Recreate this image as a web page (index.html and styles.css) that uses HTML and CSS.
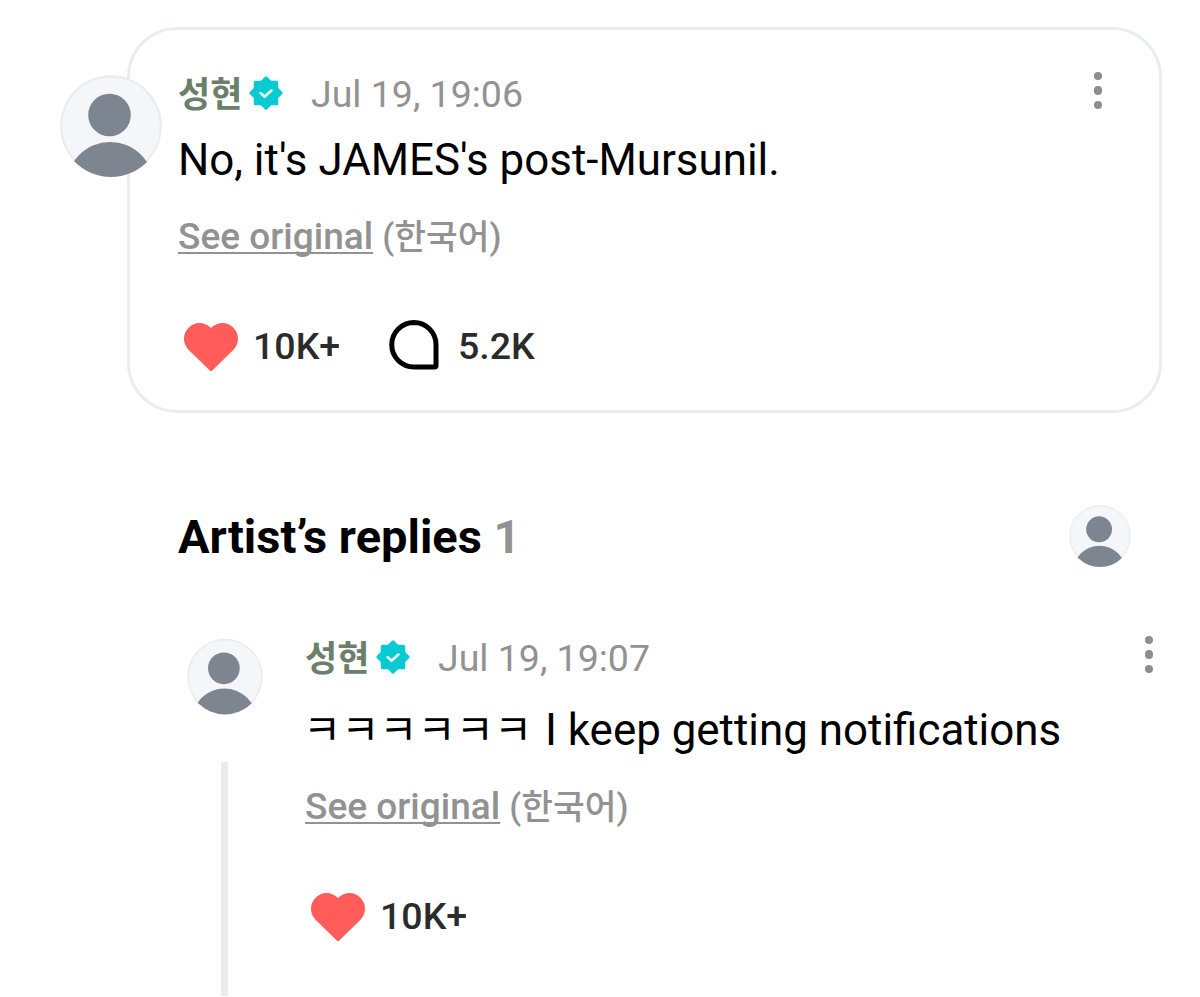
FILE: index.html
```html
<!DOCTYPE html>
<html lang="en">
<head>
  <meta charset="UTF-8">
  <title>Artist's replies</title>
  <link rel="stylesheet" href="styles.css">
</head>
<body>

<!-- Shared icons -->
<svg class="icon-defs" width="0" height="0">
  <clipPath id="avatar-clip"><circle cx="51" cy="51" r="51"/></clipPath>
  <symbol id="avatar" viewBox="0 0 102 102">
    <g clip-path="url(#avatar-clip)">
      <circle cx="51" cy="51" r="49.8" fill="#f4f6f9" stroke="#ebecee" stroke-width="2.4"/>
      <circle cx="49.5" cy="40" r="21.3" fill="#7d8591"/>
      <circle cx="50.2" cy="110.6" r="43.6" fill="#7d8591"/>
    </g>
  </symbol>
  <symbol id="verified" viewBox="0 0 34 34">
    <rect x="4.8" y="4.8" width="24.4" height="24.4" rx="1.5" fill="#08cad3"/>
    <rect x="4.8" y="4.8" width="24.4" height="24.4" rx="1.5" fill="#08cad3" transform="rotate(45 17 17)"/>
    <path d="M11.6 17.1l4 3.7 6.8-6.4" fill="none" stroke="#e6ffff" stroke-width="2.7" stroke-linecap="round" stroke-linejoin="round"/>
  </symbol>
  <symbol id="heart" viewBox="0 0 56 50">
    <path d="M28 7C20.500 .2 11.500 .8 5.600 6.700C-.8 13.200 -.3 22.800 5.500 28.700L26.500 49.300Q28 50.800 29.500 49.300L50.500 28.700C56.300 22.800 56.800 13.200 50.400 6.700C44.500 .8 35.500 .2 28 7z" fill="#ff5c5a"/>
  </symbol>
  <symbol id="comment" viewBox="0 0 50 50">
    <path d="M25 2.500A22.250 22.250 0 0 0 25 47H45.500Q47 47 47 45.500V24.500A22.100 22.100 0 0 0 25 2.500z" fill="none" stroke="#000" stroke-width="5"/>
  </symbol>
</svg>

<div class="page">
  <!-- Post -->
  <div class="post">
    <svg class="avatar post-avatar"><use href="#avatar"/></svg>
    <div class="meta">
      <span class="name">성현</span>
      <svg class="verified"><use href="#verified"/></svg>
      <span class="date">Jul 19, 19:06</span>
      <div class="more"><i></i><i></i><i></i></div>
    </div>
    <p class="message">No, it's JAMES's post-Mursunil.</p>
    <div class="original"><span class="link">See original</span> <span class="lang">(한국어)</span></div>
    <div class="reactions">
      <svg class="heart"><use href="#heart"/></svg>
      <span class="likes">10K+</span>
      <svg class="comment"><use href="#comment"/></svg>
      <span class="comments">5.2K</span>
    </div>
  </div>

  <!-- Replies -->
  <div class="replies-title">
    <h2>Artist’s replies <span class="total">1</span></h2>
    <svg class="avatar small-avatar"><use href="#avatar"/></svg>
  </div>

  <div class="reply">
    <div class="thread">
      <svg class="avatar reply-avatar"><use href="#avatar"/></svg>
      <div class="thread-line"></div>
    </div>
    <div class="reply-body">
      <div class="meta">
        <span class="name">성현</span>
        <svg class="verified"><use href="#verified"/></svg>
        <span class="date">Jul 19, 19:07</span>
        <div class="more"><i></i><i></i><i></i></div>
      </div>
      <p class="message"><span class="laugh">ㅋㅋㅋㅋㅋㅋ</span> I keep getting notifications</p>
      <div class="original"><span class="link">See original</span> <span class="lang">(한국어)</span></div>
      <div class="reactions">
        <svg class="heart"><use href="#heart"/></svg>
        <span class="likes">10K+</span>
      </div>
    </div>
  </div>
</div>

</body>
</html>
```

FILE: styles.css
```css
* {
  box-sizing: border-box;
}
body {
  margin: 0;
  background-color: #fff;
  font-family: Roboto, "Noto Sans CJK KR", sans-serif;
  color: #000;
}
.icon-defs {
  position: absolute;
}
svg {
  display: block;
  flex: none;
}
.page {
  width: 1200px;
  height: 997px;
  padding: 27px 38px 0 127px;
  overflow: hidden;
}

/* Post card */
.post {
  position: relative;
  height: 386px;
  padding: 44px 57px 0 48px;
  border: 3px solid #ebecf1;
  border-radius: 50px;
}
.post-avatar {
  position: absolute;
  left: -70px;
  top: 45px;
  width: 102px;
  height: 102px;
}
.meta {
  display: flex;
  align-items: center;
  height: 40px;
  line-height: 40px;
  white-space: nowrap;
}
.name {
  width: 71px;
  padding-top: 3px;
  font-size: 35px;
  font-weight: 700;
  color: #6b8068;
}
.verified {
  width: 34px;
  height: 34px;
  margin-bottom: 2px;
}
.date {
  margin-left: 28px;
  font-size: 37.5px;
  color: #929292;
}
.more {
  display: flex;
  flex-direction: column;
  gap: 6px;
  margin: 0 0 7px auto;
}
.more i {
  width: 8.5px;
  height: 8.5px;
  border-radius: 50%;
  background-color: #8c8d92;
}
.message {
  height: 50px;
  margin: 21px 0 0;
  font-size: 43.9px;
  line-height: 51px;
  white-space: nowrap;
}
.laugh {
  margin-left: -2px;
  margin-right: 2px;
  font-size: 41.5px;
}
.original {
  height: 44px;
  margin-top: 30px;
  font-size: 37px;
  font-weight: 500;
  line-height: 43px;
  color: #929292;
  white-space: nowrap;
}
.link {
  text-decoration: underline;
  text-decoration-thickness: 2px;
  text-underline-offset: 3px;
  text-decoration-skip-ink: none;
}
.lang {
  font-size: 34.5px;
}
.reactions {
  display: flex;
  align-items: center;
  height: 50px;
  margin-top: 62px;
  padding-left: 5px;
  font-size: 37.5px;
  font-weight: 500;
  line-height: 48px;
  color: #2b2b2b;
}
.heart {
  width: 56px;
  height: 50px;
}
.likes {
  width: 135px;
  margin-left: 14px;
  padding-bottom: 1px;
}
.comment {
  width: 50px;
  height: 50px;
  margin: 0 0 2px 1px;
}
.comments {
  margin-left: 19px;
  padding-bottom: 1px;
}

/* Replies heading */
.replies-title {
  display: flex;
  align-items: center;
  justify-content: space-between;
  height: 64px;
  margin-top: 91px;
  padding: 0 31px 0 51px;
}
.replies-title h2 {
  margin: 0;
  padding-top: 2px;
  font-size: 47px;
  font-weight: 700;
  line-height: 64px;
}
.total {
  color: #929292;
}
.small-avatar {
  width: 62px;
  height: 62px;
}

/* Reply */
.reply {
  display: flex;
  gap: 42px;
  margin-top: 70px;
  padding-left: 60px;
}
.thread {
  width: 76px;
}
.reply-avatar {
  width: 76px;
  height: 77px;
}
.thread-line {
  width: 7px;
  height: 234px;
  margin: 47px 0 0 34px;
  background-color: #e9ebef;
}
.reply-body {
  flex: 1;
}
.reply .more {
  margin-right: 9px;
}
.reply .message {
  margin-top: 27px;
}
```
